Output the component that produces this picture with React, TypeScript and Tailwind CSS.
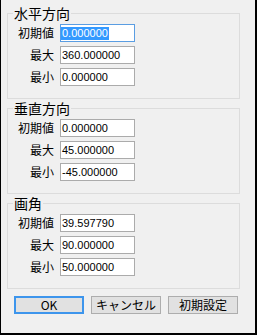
const jp = "font-['Noto_Sans_CJK_JP',sans-serif]";
const num = "font-['Liberation_Sans','Noto_Sans_CJK_JP',sans-serif]";

interface FieldProps {
	readonly label: string;
	readonly value: string;
	readonly selected?: boolean;
}

function Field({ label, value, selected }: FieldProps) {
	return (
		<div className="flex h-[18px] items-center">
			<span className={`w-[46px] text-right text-[12px] leading-4 text-black ${jp}`}>{label}</span>
			<div
				className={`ml-[6px] flex h-[18px] w-[75px] items-center border bg-white ${
					selected ? 'border-[#5a9de2]' : 'border-[#ababab]'
				}`}
			>
				<span
					className={`px-px text-[11px] leading-[13px] ${num} ${
						selected ? 'bg-[#3399ff] text-white' : 'text-black'
					}`}
				>
					{value}
				</span>
			</div>
		</div>
	);
}

interface GroupProps {
	readonly title: string;
	readonly values: [string, string, string];
	readonly selectFirst?: boolean;
}

function Group({ title, values, selectFirst }: GroupProps) {
	return (
		<div className="relative h-[86px] w-[233px] border border-[#dcdcdc] pt-[10px]">
			<span className={`absolute left-[5px] top-[-9px] bg-[#f0f0f0] px-[1px] text-[14px] leading-4 text-black ${jp}`}>
				{title}
			</span>
			<div className="flex flex-col gap-[4px]">
				<Field label="初期値" value={values[0]} selected={selectFirst} />
				<Field label="最大" value={values[1]} />
				<Field label="最小" value={values[2]} />
			</div>
		</div>
	);
}

function Button({ children, primary }: { children: string; primary?: boolean }) {
	return (
		<button
			className={`flex h-[18px] w-[70px] items-center justify-center bg-[#e1e1e1] text-[12px] leading-4 text-black ${jp} ${
				primary ? 'border-2 border-[#3d95ec]' : 'border border-[#adadad]'
			}`}
		>
			{children}
		</button>
	);
}

export default function App() {
	return (
		<div className="h-[335px] w-[257px] border-b-2 border-l border-r-2 border-black bg-[#f0f0f0]">
			<div className="flex flex-col gap-[9px] pl-[6px] pt-[13px]">
				<Group title="水平方向" values={['0.000000', '360.000000', '0.000000']} selectFirst />
				<Group title="垂直方向" values={['0.000000', '45.000000', '-45.000000']} />
				<Group title="画角" values={['39.597790', '90.000000', '50.000000']} />
			</div>
			<div className="mt-[7px] flex gap-[7px] pl-[13px]">
				<Button primary>OK</Button>
				<Button>キャンセル</Button>
				<Button>初期設定</Button>
			</div>
		</div>
	);
}
